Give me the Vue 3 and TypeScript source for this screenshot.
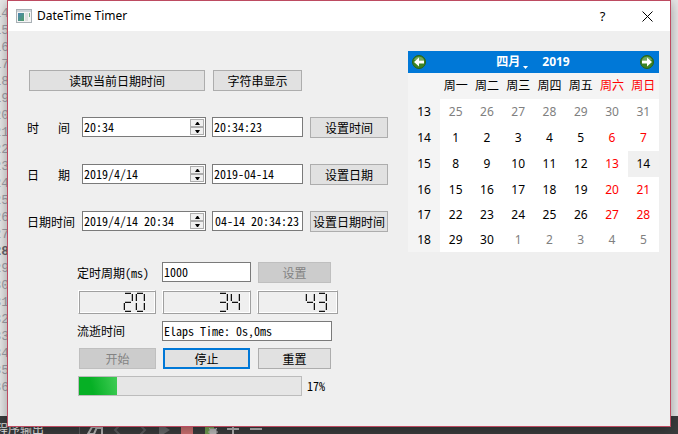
<script setup lang="ts">
import { onMounted, ref } from 'vue'

interface DateRow {
  id: string
  label: string
  spread: boolean
  editValue: string
  textValue: string
  action: string
}

interface Day {
  day: number
  outside?: boolean
  selected?: boolean
}

interface Week {
  number: number
  days: Day[]
}

const rows = ref<DateRow[]>([
  { id: 'time', label: '时间', spread: true, editValue: '20:34', textValue: '20:34:23', action: '设置时间' },
  { id: 'date', label: '日期', spread: true, editValue: '2019/4/14', textValue: '2019-04-14', action: '设置日期' },
  { id: 'datetime', label: '日期时间', spread: false, editValue: '2019/4/14 20:34', textValue: '2019-04-14 20:34:23', action: '设置日期时间' },
])

const weekdays = ['周一', '周二', '周三', '周四', '周五', '周六', '周日']

function buildWeeks(): Week[] {
  const weeks: Week[] = []
  const start = new Date(2019, 2, 25)
  for (let w = 0; w < 6; w++) {
    const days: Day[] = []
    for (let d = 0; d < 7; d++) {
      const date = new Date(start.getFullYear(), start.getMonth(), start.getDate() + w * 7 + d)
      const outside = date.getMonth() !== 3
      days.push({ day: date.getDate(), outside, selected: !outside && date.getDate() === 14 })
    }
    weeks.push({ number: 13 + w, days })
  }
  return weeks
}
const weeks = buildWeeks()

const interval = ref('1000')
const elapsed = ref('Elaps Time: 0s,0ms')
const progress = ref(17)
const displays = ref(['20', '34', '43'])

// Lit segments of each digit: a top, b/c right, d bottom, e/f left, g middle
const SEGMENTS: Record<string, string> = {
  '0': 'abcdef', '1': 'bc', '2': 'abged', '3': 'abgcd', '4': 'fgbc',
  '5': 'afgcd', '6': 'afgedc', '7': 'abc', '8': 'abcdefg', '9': 'abcdfg',
}

const lineNumbers = Array.from({ length: 23 }, (_, i) => 14 + i)

const textFields = ref<HTMLInputElement[]>([])
onMounted(() => {
  textFields.value.forEach((el) => { el.scrollLeft = el.scrollWidth })
})
</script>

<template>
  <div class="desktop">
    <div class="editor">
      <ol class="gutter">
        <li v-for="n in lineNumbers" :key="n" :class="{ current: n === 28 }">{{ n }}</li>
      </ol>
    </div>
    <div class="output-bar">
      <span class="output-title">程序输出</span>
      <svg class="output-icons" viewBox="0 0 190 18" width="190" height="18" aria-hidden="true">
        <path d="M1.500 0V18" stroke="#5c5e60" />
        <path d="M14 11h5l-3 7h-6zM19 12h5v6" fill="none" stroke="#b4b4b4" stroke-width="2" />
        <path d="M43 8l-6 6 6 6M61 8l6 6-6 6" fill="none" stroke="#5a5c5e" stroke-width="2" />
        <path d="M81 7l11 7-11 7z" fill="#666869" />
        <path d="M103 7h12v11h-12z" fill="#cb7070" />
        <path d="M127 8h9v10h-9z" fill="#6f9c50" />
        <path d="M132 13h6v5h-6zM131 12l2 2M139 12l-2 2M130 16h10" fill="#b8b8b8" stroke="#b8b8b8" />
        <path d="M149 13h12M155 7v11M172 13h12" fill="none" stroke="#b4b4b4" stroke-width="2" />
      </svg>
    </div>

    <main class="dialog">
      <header class="title-bar">
        <svg class="app-icon" viewBox="0 0 16 14" width="16" height="14" aria-hidden="true">
          <defs>
            <linearGradient id="appPane" x1="0" y1="0" x2="1" y2="1">
              <stop offset="0" stop-color="#4b86b4" />
              <stop offset="1" stop-color="#4f9c66" />
            </linearGradient>
          </defs>
          <rect x=".5" y=".5" width="15" height="13" fill="#f4f4f4" stroke="#a9b0b5" />
          <rect x="1" y="1" width="14" height="2" fill="#cdd3d8" />
          <rect x="2" y="4" width="6" height="8" fill="url(#appPane)" />
          <rect x="9" y="4" width="3" height="8" fill="#dedede" />
          <rect x="13" y="4" width="1" height="4" fill="#78b08a" />
        </svg>
        <h1>DateTime Timer</h1>
        <button class="caption" type="button" aria-label="Help">?</button>
        <button class="caption" type="button" aria-label="Close">
          <svg viewBox="0 0 11 11" width="11" height="11"><path d="M.5 .5l10 10M10.500 .5l-10 10" stroke="#000" fill="none" /></svg>
        </button>
      </header>

      <div class="content">
        <div class="left">
          <div class="top-actions">
            <button class="push read" type="button">读取当前日期时间</button>
            <button class="push show" type="button">字符串显示</button>
          </div>

          <div v-for="row in rows" :key="row.id" class="date-row">
            <label :for="row.id" :class="{ spread: row.spread }">
              <template v-if="row.spread"><span>{{ row.label[0] }}</span><span>{{ row.label[1] }}</span></template>
              <template v-else>{{ row.label }}</template>
            </label>
            <div class="spin">
              <input :id="row.id" v-model="row.editValue" type="text" />
              <div class="steps">
                <button type="button" aria-label="Up"><svg viewBox="0 0 5 3" width="5" height="3"><path d="M0 3L2 0H3L5 3z" /></svg></button>
                <button type="button" aria-label="Down"><svg viewBox="0 0 5 3" width="5" height="3"><path d="M0 0L2 3H3L5 0z" /></svg></button>
              </div>
            </div>
            <input ref="textFields" v-model="row.textValue" class="field" type="text" :aria-label="row.label" />
            <button class="push" type="button">{{ row.action }}</button>
          </div>

          <div class="timer">
            <label for="interval">定时周期(ms)</label>
            <input id="interval" v-model="interval" class="field" type="text" />
            <button class="push" type="button" disabled>设置</button>

            <output v-for="(value, i) in displays" :key="i" class="lcd" :aria-label="value">
              <span v-for="(digit, j) in value" :key="j" class="digit">
                <i v-for="s in SEGMENTS[digit]" :key="s" :class="['seg', s]"></i>
              </span>
            </output>

            <label for="elapsed">流逝时间</label>
            <input id="elapsed" v-model="elapsed" class="field elapsed" type="text" />

            <button class="push start" type="button" disabled>开始</button>
            <button class="push default" type="button">停止</button>
            <button class="push" type="button">重置</button>
          </div>

          <div class="progress-row">
            <div class="progress" role="progressbar" :aria-valuenow="progress" aria-valuemin="0" aria-valuemax="100">
              <div class="chunk" :style="{ width: progress + '%' }"></div>
            </div>
            <span>{{ progress }}%</span>
          </div>
        </div>

        <section class="calendar">
          <div class="nav">
            <button class="arrow" type="button" aria-label="Previous month">
              <svg viewBox="0 0 14 14" width="14" height="14">
                <circle cx="7" cy="7" r="6.500" fill="#3d8423" stroke="#2b6218" />
                <path d="M2 5a5.500 5.500 0 0 1 10 0z" fill="#73a85e" />
                <path d="M2 7L7 2.500v3h5v3H7v3z" fill="#fff" />
              </svg>
            </button>
            <div class="month-year">
              <button class="month" type="button">四月<svg viewBox="0 0 5 3" width="5" height="3"><path d="M0 0h5L2.500 3z" fill="#fff" /></svg></button>
              <button class="year" type="button">2019</button>
            </div>
            <button class="arrow" type="button" aria-label="Next month">
              <svg viewBox="0 0 14 14" width="14" height="14">
                <circle cx="7" cy="7" r="6.500" fill="#3d8423" stroke="#2b6218" />
                <path d="M2 5a5.500 5.500 0 0 1 10 0z" fill="#73a85e" />
                <path d="M12 7L7 2.500v3H2v3h5v3z" fill="#fff" />
              </svg>
            </button>
          </div>
          <table>
            <thead>
              <tr>
                <th class="week"></th>
                <th v-for="(d, i) in weekdays" :key="d" :class="{ weekend: i > 4 }">{{ d }}</th>
              </tr>
            </thead>
            <tbody>
              <tr v-for="w in weeks" :key="w.number">
                <th class="week">{{ w.number }}</th>
                <td
                  v-for="(d, i) in w.days"
                  :key="i"
                  :class="{ weekend: i > 4 && !d.outside && !d.selected, outside: d.outside, selected: d.selected }"
                >{{ d.day }}</td>
              </tr>
            </tbody>
          </table>
        </section>
      </div>
    </main>
  </div>
</template>

<style>
body {
  margin: 0;
}
</style>

<style scoped>
* {
  box-sizing: border-box;
}
.desktop {
  position: relative;
  display: flex;
  flex-direction: column;
  height: 100vh;
  overflow: hidden;
  font: 12px/16px "Noto Sans CJK SC", sans-serif;
  color: #000;
}
button,
input {
  margin: 0;
  padding: 0;
  border: 0;
  font: inherit;
  color: inherit;
}
button {
  display: flex;
  align-items: center;
  justify-content: center;
}
.editor {
  flex: 1;
  min-height: 0;
  overflow: hidden;
  background: #e8e8e8;
}
.gutter {
  width: 9px;
  margin: 0;
  padding: 5px 0 0;
  list-style: none;
  direction: rtl;
  font: 13px/17px "Liberation Mono", monospace;
  color: #a2a2aa;
}
.gutter .current {
  font-weight: bold;
  color: #66666c;
}
.output-bar {
  display: flex;
  align-items: flex-start;
  height: 18px;
  background: #3a3c3d;
  color: #e0e0e0;
}
.output-title {
  width: 82px;
  margin-left: -4px;
  padding-top: 5px;
  white-space: nowrap;
}
.dialog {
  position: absolute;
  inset: 0 7px 7px;
  display: flex;
  flex-direction: column;
  background: #efefef;
  border: 1px solid #bd4b61;
  box-shadow: 0 2px 12px rgba(0, 0, 0, 0.35);
}
.title-bar {
  display: flex;
  align-items: center;
  height: 30px;
  padding-left: 8px;
  background: #fff;
  font-family: "Noto Sans", sans-serif;
}
.title-bar h1 {
  flex: 1;
  margin: 0 0 0 5px;
  font-size: 12px;
  font-weight: normal;
}
.caption {
  width: 45px;
  height: 30px;
  background: none;
  font-size: 13px;
}
.content {
  display: flex;
  justify-content: space-between;
  align-items: flex-start;
  padding: 20px 11px 0 19px;
  font-feature-settings: "hwid";
}
.left {
  padding-top: 19px;
}
.top-actions {
  display: flex;
  gap: 8px;
  padding-left: 2px;
  margin-bottom: 26px;
}
.push {
  height: 21px;
  background: #e1e1e1;
  border: 1px solid #adadad;
  white-space: nowrap;
}
.push:disabled {
  background: #cccccc;
  border-color: #bfbfbf;
  color: #838383;
}
.push.default {
  border: 2px solid #0078d7;
}
.read {
  width: 176px;
}
.show {
  width: 89px;
}
.date-row {
  display: grid;
  grid-template-columns: 49px 124px 91px 79px;
  column-gap: 6px;
  margin-bottom: 26px;
}
.date-row .push {
  margin-left: 1px;
}
label {
  display: flex;
  align-items: center;
  white-space: nowrap;
}
label.spread {
  justify-content: space-between;
  padding-right: 6px;
}
.field,
.spin {
  width: 100%;
  min-width: 0;
  height: 20px;
  background: #fff;
  border: 1px solid #7a7a7a;
}
.field {
  padding: 0 3px 2px 1px;
}
.spin {
  display: flex;
  padding: 1px;
}
.spin input {
  flex: 1;
  min-width: 0;
  padding: 0 0 1px;
  background: none;
}
.steps {
  display: grid;
  grid-template-rows: 1fr 1fr;
  width: 14px;
}
.steps button {
  background: #f0f0f0;
  border: 1px solid #adadad;
}
.timer {
  display: grid;
  grid-template-columns: 78px 89px 81px;
  grid-template-rows: 21px 24px 20px 21px;
  gap: 7px 6px;
  margin-left: 51px;
  padding-top: 4px;
}
.timer label {
  margin-left: -1px;
}
.timer .push {
  width: 73px;
  margin-left: 1px;
}
.timer .start {
  width: 77px;
}
.timer .default {
  width: 87px;
}
.timer .elapsed {
  grid-column: 2 / 4;
  width: 170px;
}
.lcd {
  display: flex;
  justify-content: flex-end;
  align-items: flex-start;
  gap: 2px;
  padding: 1px 10px 0 0;
  border: 1px solid;
  border-color: #fff #a0a0a0 #a0a0a0 #fff;
  box-shadow: inset 1px 1px #a0a0a0, inset -1px -1px #fff;
}
.digit {
  position: relative;
  width: 10px;
  height: 20px;
}
.seg {
  position: absolute;
  border: 0 solid #b4b4b4;
  background: #111;
}
.a, .g, .d { left: 2px; right: 2px; height: 2px; border-top-width: 1px; }
.a { top: 0; }
.g { top: 9px; }
.d { bottom: 0; }
.b, .c, .e, .f { width: 2px; height: 7px; border-left-width: 1px; }
.b, .f { top: 2px; }
.c, .e { bottom: 2px; }
.b, .c { right: 0; }
.e, .f { left: 0; }
.progress-row {
  display: flex;
  align-items: center;
  gap: 5px;
  margin: 7px 0 0 51px;
}
.progress {
  width: 224px;
  height: 20px;
  background: #e6e6e6;
  border: 1px solid #bcbcbc;
}
.chunk {
  height: 100%;
  background: linear-gradient(75deg, #06b025 35%, #40cc55);
}
.calendar {
  width: 251px;
  font-family: "Noto Sans", "Noto Sans CJK SC", sans-serif;
  font-feature-settings: normal;
}
.nav {
  display: flex;
  align-items: center;
  justify-content: space-between;
  height: 22px;
  padding: 0 5px 0 4px;
  background: #0078d7;
  color: #fff;
}
.nav button {
  background: none;
}
.month-year {
  display: flex;
  gap: 14px;
  font-weight: bold;
}
.month svg {
  margin: 11px 0 0 3px;
}
table {
  width: 100%;
  table-layout: fixed;
  border-collapse: collapse;
  background: #fff;
}
th,
td {
  height: 26px;
  padding: 0;
  text-align: center;
  font-weight: normal;
}
tr:nth-child(n + 4) > * {
  height: 25px;
}
thead th,
.week {
  background: #f4f4f4;
}
.week {
  width: 32px;
}
.weekend {
  color: #ff0000;
}
.outside {
  color: #808080;
}
.selected {
  background: #f0f0f0;
}
</style>
